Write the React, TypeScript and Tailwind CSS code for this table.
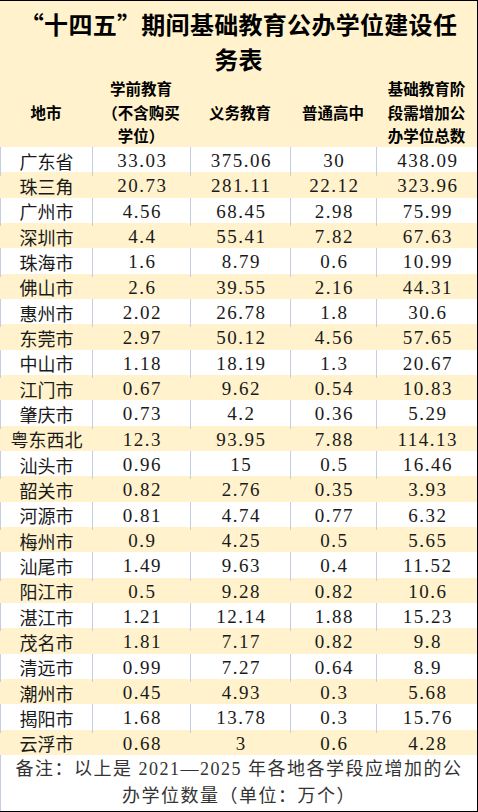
const rows: [string, string, string, string, string][] = [
  ['广东省', '33.03', '375.06', '30', '438.09'],
  ['珠三角', '20.73', '281.11', '22.12', '323.96'],
  ['广州市', '4.56', '68.45', '2.98', '75.99'],
  ['深圳市', '4.4', '55.41', '7.82', '67.63'],
  ['珠海市', '1.6', '8.79', '0.6', '10.99'],
  ['佛山市', '2.6', '39.55', '2.16', '44.31'],
  ['惠州市', '2.02', '26.78', '1.8', '30.6'],
  ['东莞市', '2.97', '50.12', '4.56', '57.65'],
  ['中山市', '1.18', '18.19', '1.3', '20.67'],
  ['江门市', '0.67', '9.62', '0.54', '10.83'],
  ['肇庆市', '0.73', '4.2', '0.36', '5.29'],
  ['粤东西北', '12.3', '93.95', '7.88', '114.13'],
  ['汕头市', '0.96', '15', '0.5', '16.46'],
  ['韶关市', '0.82', '2.76', '0.35', '3.93'],
  ['河源市', '0.81', '4.74', '0.77', '6.32'],
  ['梅州市', '0.9', '4.25', '0.5', '5.65'],
  ['汕尾市', '1.49', '9.63', '0.4', '11.52'],
  ['阳江市', '0.5', '9.28', '0.82', '10.6'],
  ['湛江市', '1.21', '12.14', '1.88', '15.23'],
  ['茂名市', '1.81', '7.17', '0.82', '9.8'],
  ['清远市', '0.99', '7.27', '0.64', '8.9'],
  ['潮州市', '0.45', '4.93', '0.3', '5.68'],
  ['揭阳市', '1.68', '13.78', '0.3', '15.76'],
  ['云浮市', '0.68', '3', '0.6', '4.28'],
];

const cols = 'grid grid-cols-[92px_98px_100px_86px_101px]';

export default function App() {
  return (
    <div
      lang="zh-CN"
      className="w-[478px] h-[812px] bg-white border-t border-r border-b border-black overflow-hidden text-[#1a1a1a] font-['Liberation_Serif','Noto_Sans_CJK_SC',serif]"
    >
      {/* title + header share the cream fill */}
      <div className="bg-[#fff2cc]">
        <div className="h-[76px] pt-[5px] text-center text-black font-bold text-[24px] leading-[35px] tracking-[0.3px] whitespace-nowrap font-['Noto_Sans_CJK_SC',sans-serif]">
          “十四五”期间基础教育公办学位建设任
          <br />
          务表
        </div>
        <div className={`${cols} h-[70px] items-center text-center font-bold text-black text-[15.5px] leading-[23.5px] font-['Noto_Sans_CJK_SC',sans-serif]`}>
          <div>地市</div>
          <div>
            学前教育
            <br />
            （不含购买
            <br />
            学位）
          </div>
          <div>义务教育</div>
          <div>普通高中</div>
          <div>
            基础教育阶
            <br />
            段需增加公
            <br />
            办学位总数
          </div>
        </div>
      </div>

      {rows.map((r, i) => {
        const cream = i % 2 === 1;
        const cell = `flex items-center justify-center border-l ${
          cream ? 'border-transparent' : 'border-[#c5cde0]'
        }`;
        return (
          <div
            key={r[0]}
            className={`${cols} h-[25.33px] ${cream ? 'bg-[#fff2cc]' : 'bg-white'}`}
          >
            <div className={`${cell} text-[18px] font-['Noto_Sans_CJK_SC',sans-serif]`}>
              {r[0]}
            </div>
            {r.slice(1).map((v, j) => (
              <div key={j} className={`${cell} text-[19px] tracking-[1.5px] pl-[1.5px]`}>
                {v}
              </div>
            ))}
          </div>
        );
      })}

      <div className="h-[56px] border-l border-[#c5cde0] flex flex-col items-center justify-center text-[18px] leading-[27px] tracking-[1.5px] text-[#333] whitespace-nowrap">
        <div>备注：以上是 2021—2025 年各地各学段应增加的公</div>
        <div>办学位数量（单位：万个）</div>
      </div>
    </div>
  );
}
